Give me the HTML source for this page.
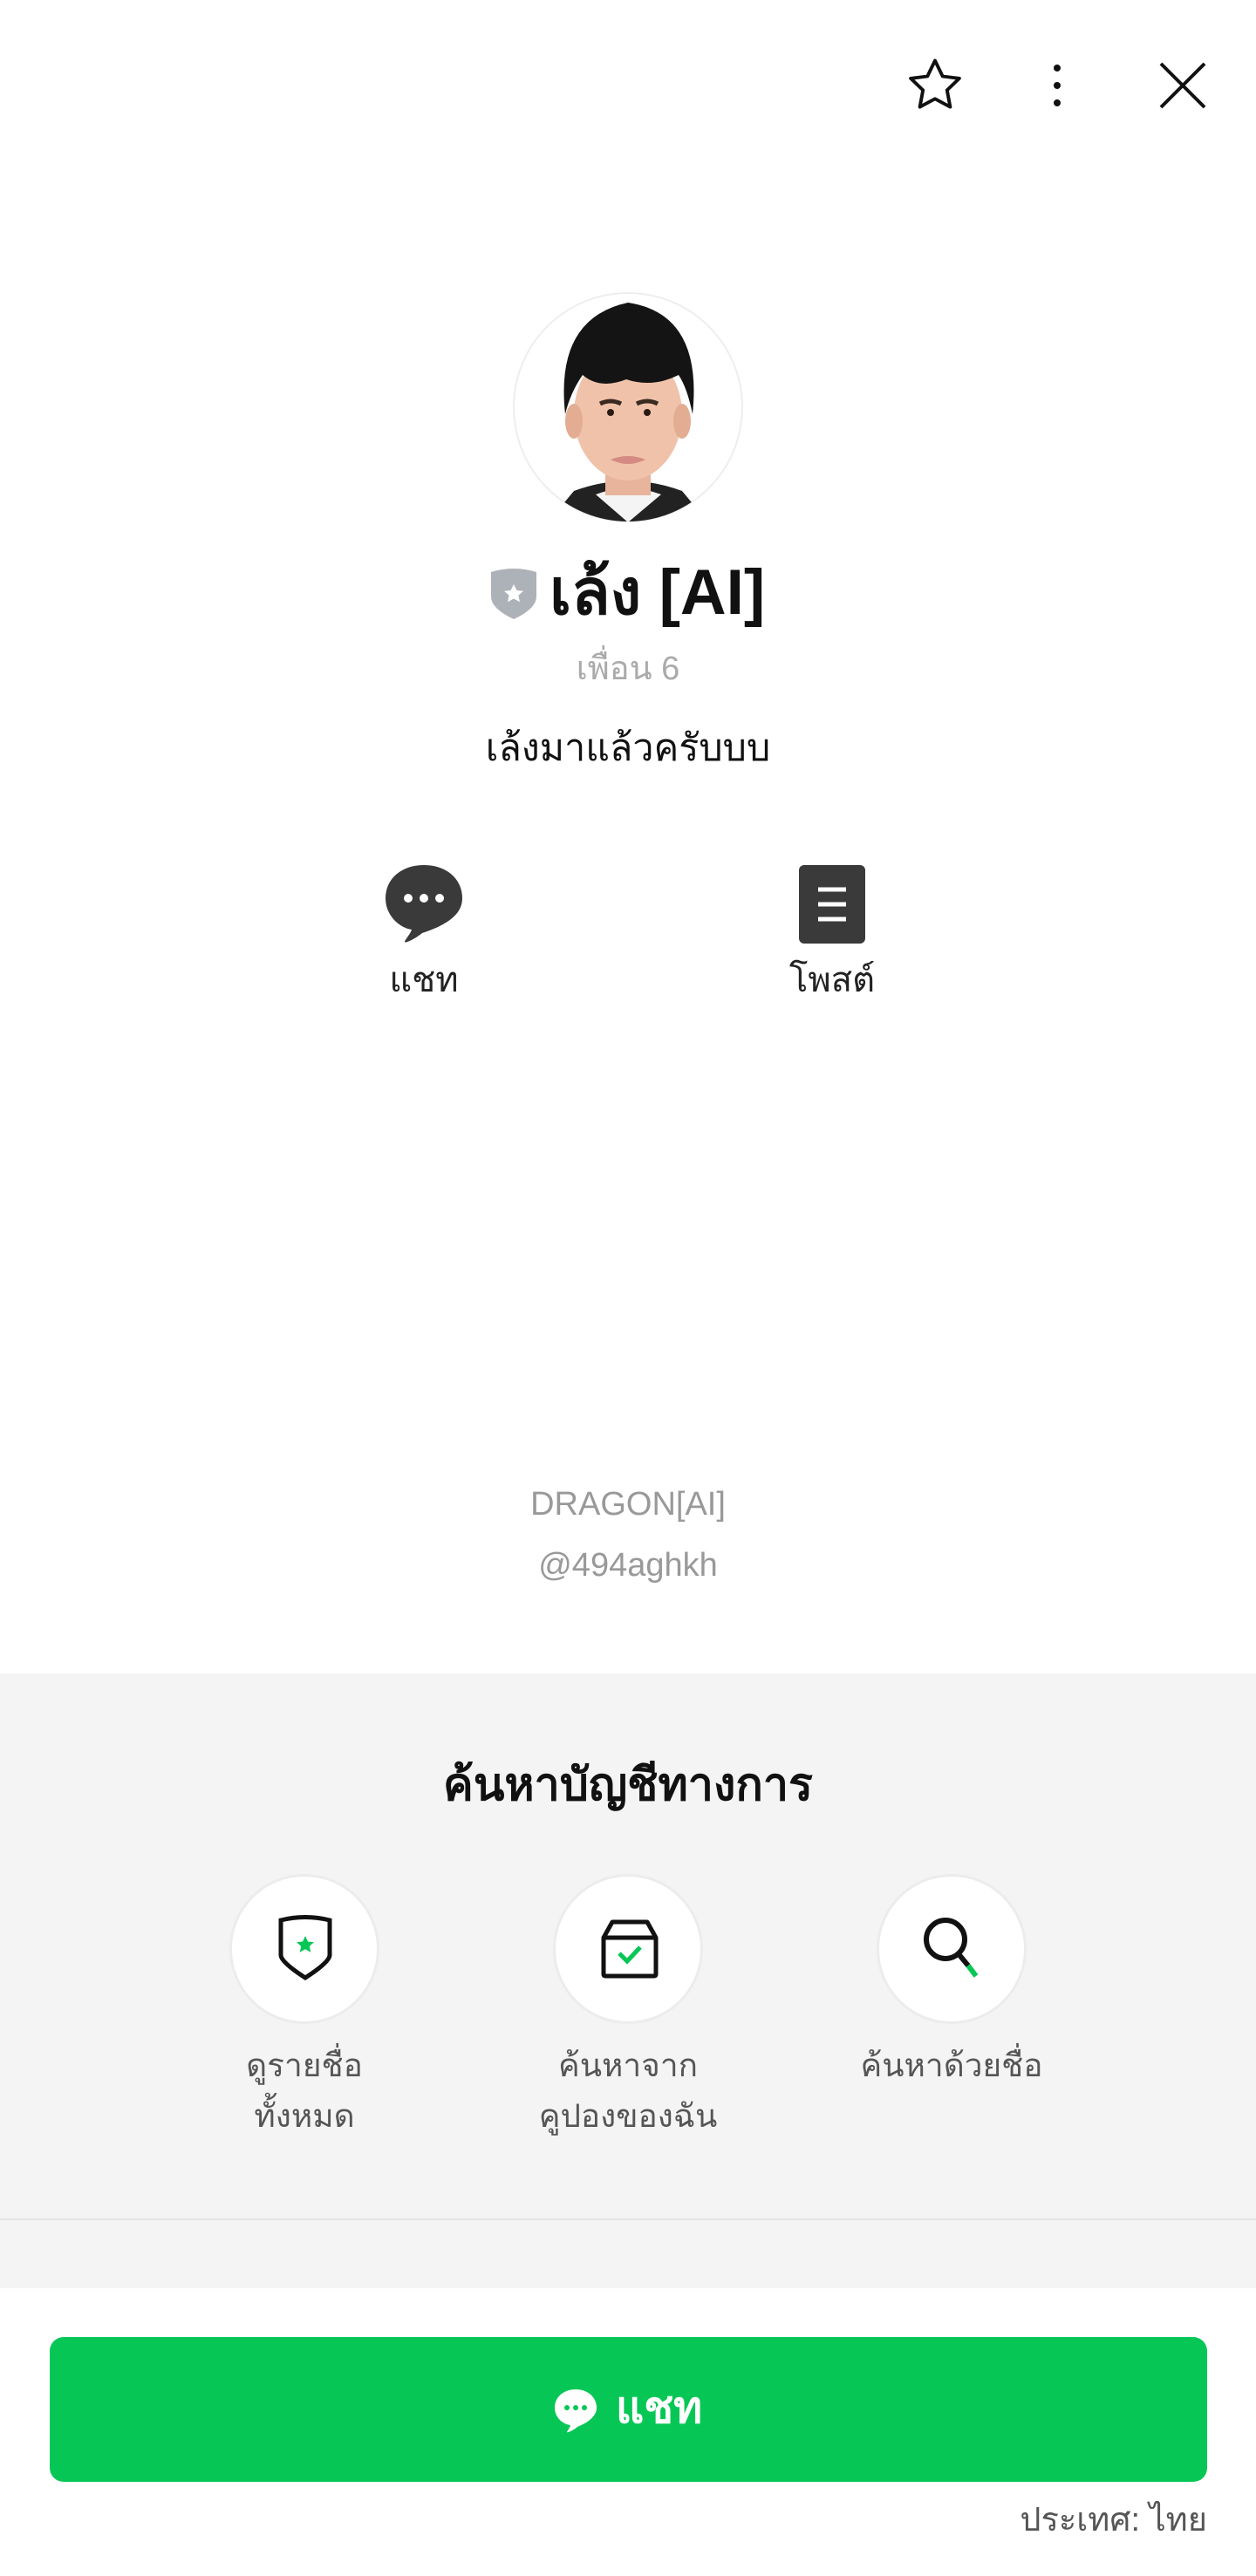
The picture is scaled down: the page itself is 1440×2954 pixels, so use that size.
<!DOCTYPE html>
<html><head><meta charset="utf-8"><style>
*{margin:0;padding:0;box-sizing:border-box}
body{width:1440px;height:2954px;background:#fff;font-family:"Liberation Sans","Noto Sans CJK SC",sans-serif;position:relative;overflow:hidden;color:#111}
.a{position:absolute}
.c{position:absolute;left:0;width:1440px;text-align:center}
.circ{position:absolute;width:172px;height:172px;border-radius:50%;background:#fff;border:3px solid #ececec}
.lbl{position:absolute;width:320px;text-align:center;font-size:37px;color:#555;line-height:58px}
</style></head><body>
<svg class="a" style="left:1036px;top:62px" width="72" height="72" viewBox="0 0 24 24"><path d="M12 2.5l2.9 6 6.4.8-4.7 4.5 1.2 6.4L12 17.1l-5.8 3.1 1.2-6.4L2.7 9.3l6.4-.8z" fill="none" stroke="#111" stroke-width="1.3" stroke-linejoin="round"/></svg>
<svg class="a" style="left:1200px;top:68px" width="24" height="60" viewBox="0 0 24 60"><circle cx="12" cy="10" r="4" fill="#111"/><circle cx="12" cy="30" r="4" fill="#111"/><circle cx="12" cy="50" r="4" fill="#111"/></svg>
<svg class="a" style="left:1328px;top:70px" width="56" height="56" viewBox="0 0 56 56"><path d="M3 3L53 53M53 3L3 53" stroke="#111" stroke-width="4"/></svg>
<svg class="a" style="left:588px;top:335px" width="264" height="264" viewBox="0 0 264 264">
<defs><clipPath id="cp"><circle cx="132" cy="132" r="131"/></clipPath></defs>
<circle cx="132" cy="132" r="131" fill="#fff" stroke="#eee" stroke-width="2"/>
<g clip-path="url(#cp)">
<path d="M40 264 L70 228 Q132 205 194 228 L224 264Z" fill="#222"/>
<path d="M95 232 L132 264 L170 232 Q132 218 95 232Z" fill="#f4f4f4"/>
<rect x="106" y="175" width="52" height="58" fill="#e8b49c"/>
<ellipse cx="132" cy="140" rx="62" ry="76" fill="#f0c2aa"/>
<ellipse cx="70" cy="148" rx="10" ry="20" fill="#e3ad94"/><ellipse cx="194" cy="148" rx="10" ry="20" fill="#e3ad94"/>
<path d="M60 140 Q48 30 132 12 Q218 25 206 140 Q200 110 190 95 Q160 110 130 100 Q100 112 80 95 Q66 115 60 140Z" fill="#141414"/>
<path d="M100 128 Q112 122 124 128" stroke="#3a2a22" stroke-width="5" fill="none"/><path d="M142 128 Q154 122 166 128" stroke="#3a2a22" stroke-width="5" fill="none"/>
<circle cx="112" cy="138" r="4" fill="#2a1a14"/><circle cx="154" cy="138" r="4" fill="#2a1a14"/>
<path d="M112 192 Q132 184 152 192 Q132 202 112 192Z" fill="#d48a82"/>
</g></svg>
<svg class="a" style="left:561px;top:650px" width="56" height="62" viewBox="0 0 56 62"><path d="M2 6 Q28 -2 54 6 L54 34 Q54 48 28 60 Q2 48 2 34Z" fill="#adb1b8"/><path d="M28 20l3.5 7 7.5.8-5.6 5 1.6 7.4L28 36.5l-7 3.7 1.6-7.4-5.6-5 7.5-.8z" fill="#fff"/></svg>
<div class="a" style="left:630px;top:630px;font-size:73px;font-weight:bold;line-height:100px">เล้ง [AI]</div>
<div class="c" style="top:740px;font-size:38px;color:#aaa;line-height:54px">เพื่อน 6</div>
<div class="c" style="top:828px;font-size:43px;color:#111;line-height:60px">เล้งมาแล้วครับบบ</div>
<svg class="a" style="left:438px;top:988px" width="96" height="96" viewBox="0 0 96 96"><path d="M48 4C22 4 4 20 4 42c0 20 16 34 30 36-2 6-8 12-8 14 0 2 10-2 20-10C76 72 92 60 92 42 92 20 74 4 48 4Z" fill="#3a3a3a"/><circle cx="30" cy="42" r="5" fill="#fff"/><circle cx="48" cy="42" r="5" fill="#fff"/><circle cx="66" cy="42" r="5" fill="#fff"/></svg>
<div class="a" style="left:386px;top:1095px;width:200px;text-align:center;font-size:40px;line-height:58px;color:#222">แชท</div>
<svg class="a" style="left:914px;top:990px" width="80" height="94" viewBox="0 0 80 94"><rect x="2" y="2" width="76" height="90" rx="6" fill="#3a3a3a"/><path d="M24 30h32M24 47h32M24 64h32" stroke="#fff" stroke-width="5"/></svg>
<div class="a" style="left:854px;top:1095px;width:200px;text-align:center;font-size:40px;line-height:58px;color:#222">โพสต์</div>
<div class="c" style="top:1698px;font-size:38px;color:#999;line-height:54px">DRAGON[AI]</div>
<div class="c" style="top:1768px;font-size:38px;color:#999;line-height:54px">@494aghkh</div>
<div class="a" style="left:0;top:1919px;width:1440px;height:705px;background:#f4f4f4"></div>
<div class="a" style="left:0;top:2544px;width:1440px;height:2px;background:#e4e4e4"></div>
<div class="c" style="top:2012px;font-size:52px;font-weight:bold;line-height:70px">ค้นหาบัญชีทางการ</div>
<div class="circ" style="left:263px;top:2149px"></div>
<div class="circ" style="left:634px;top:2149px"></div>
<div class="circ" style="left:1005px;top:2149px"></div>
<svg class="a" style="left:318px;top:2196px" width="64" height="76" viewBox="0 0 64 76"><path d="M4 6 Q32 -1 60 6 L60 46 Q60 54 32 72 Q4 54 4 46Z" fill="none" stroke="#111" stroke-width="5"/><path d="M32 24l3 6.5 7 .7-5.2 4.6 1.5 6.9L32 39.2l-6.3 3.5 1.5-6.9-5.2-4.6 7-.7z" fill="#06c755"/></svg>
<svg class="a" style="left:688px;top:2200px" width="68" height="70" viewBox="0 0 68 70"><path d="M4 22 L14 4 H54 L64 22 V64 Q64 66 62 66 H6 Q4 66 4 64Z M4 22H64" fill="none" stroke="#111" stroke-width="5" stroke-linejoin="round"/><path d="M22 40l9 9 15-16" fill="none" stroke="#06c755" stroke-width="5"/></svg>
<svg class="a" style="left:1056px;top:2196px" width="76" height="76" viewBox="0 0 76 76"><circle cx="28" cy="28" r="22" fill="none" stroke="#111" stroke-width="6"/><path d="M44 46l10 12" stroke="#111" stroke-width="6"/><path d="M54 58l9 12" stroke="#06c755" stroke-width="6"/></svg>
<div class="lbl" style="left:189px;top:2340px">ดูรายชื่อ<br>ทั้งหมด</div>
<div class="lbl" style="left:560px;top:2340px">ค้นหาจาก<br>คูปองของฉัน</div>
<div class="lbl" style="left:931px;top:2340px">ค้นหาด้วยชื่อ</div>
<div class="a" style="left:57px;top:2680px;width:1327px;height:166px;border-radius:16px;background:#06c755"></div>
<svg class="a" style="left:634px;top:2738px" width="52" height="52" viewBox="0 0 52 52"><path d="M26 2C12 2 2 11 2 23c0 11 9 19 18 20-1 4-4 7-4 8 0 1 6-1 12-6C40 40 50 33 50 23 50 11 40 2 26 2Z" fill="#fff"/><circle cx="16" cy="23" r="3" fill="#06c755"/><circle cx="26" cy="23" r="3" fill="#06c755"/><circle cx="36" cy="23" r="3" fill="#06c755"/></svg>
<div class="a" style="left:706px;top:2728px;font-size:50px;font-weight:bold;color:#fff;line-height:66px">แชท</div>
<div class="a" style="left:984px;top:2862px;width:400px;text-align:right;font-size:38px;color:#555;line-height:56px">ประเทศ: ไทย</div>
</body></html>
